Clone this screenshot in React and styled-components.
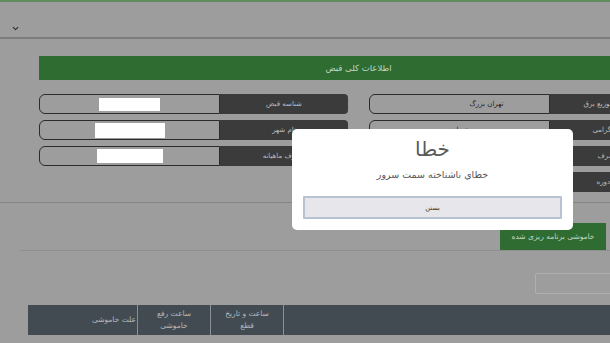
import React from 'react';
import styled, { createGlobalStyle } from 'styled-components';
import { ChevronDown } from 'lucide-react';

const GlobalStyle = createGlobalStyle`
    html, body {
        margin: 0;
        padding: 0;
        background: #9d9d9d;
        overflow: hidden;
        font-family: "DejaVu Sans", "Noto Sans", sans-serif;
    }
`;

const Page = styled.div`
    width: 610px;
    height: 343px;
    overflow: hidden;
    border-top: 2px solid #5e8c5e;
    box-sizing: border-box;
`;

const CollapseHeader = styled.div`
    height: 37px;
    padding: 16px 0 0 11px;
    box-sizing: border-box;
    border-bottom: 2px solid #7c7c7c;
    color: #2e2e2e;
`;

const InfoSection = styled.div`
    padding: 17px 0 10px 39px;
    border-bottom: 1px solid #858585;
`;

const SectionTitle = styled.div`
    width: 639px;
    height: 24px;
    background: #2f6c31;
    color: #c2d6c2;
    font-size: 8.5px;
    display: flex;
    align-items: center;
    justify-content: center;
    direction: rtl;
`;

const Columns = styled.div`
    margin-top: 14px;
    display: grid;
    grid-template-columns: 309px 309px;
    column-gap: 21px;
    align-items: start;
`;

const Column = styled.div`
    display: flex;
    flex-direction: column;
    gap: 6px;
`;

const Field = styled.div`
    display: flex;
    height: 20px;
`;

const Value = styled.div`
    flex: 0 0 181px;
    box-sizing: border-box;
    border: 1.5px solid #2b2b2b;
    border-radius: 6px 0 0 6px;
    display: flex;
    align-items: center;
    justify-content: center;
    color: #1f1f1f;
    font-size: 7px;
`;

const ValueText = styled.span`
    padding-left: ${p => p.$nudge || 0}px;
    direction: rtl;
    white-space: nowrap;
`;

const Masked = styled.span`
    display: block;
    width: ${p => p.$w}px;
    height: ${p => p.$h}px;
    background: #ffffff;
`;

const Label = styled.div`
    flex: 0 0 128px;
    background: #3b3b3b;
    border-radius: 0 4px 4px 0;
    color: #bdbdbd;
    font-size: 7px;
    display: flex;
    align-items: center;
    justify-content: center;
    direction: rtl;
    white-space: nowrap;
`;

const TabBar = styled.div`
    margin: 20px 0 0 20px;
    height: 27px;
    border-bottom: 1px solid #8f8f8f;
    display: flex;
    justify-content: flex-end;
`;

const Tab = styled.div`
    width: 106px;
    margin-right: 4px;
    background: #2f6c31;
    color: #c2d6c2;
    font-size: 7.5px;
    display: flex;
    align-items: center;
    justify-content: center;
    direction: rtl;
    white-space: nowrap;
`;

const FilterRow = styled.div`
    margin-top: 22px;
    display: flex;
    justify-content: flex-end;
`;

const FilterInput = styled.div`
    width: 80px;
    height: 19px;
    margin-right: -7px;
    border: 1px solid #b0b0b0;
    border-radius: 2px;
`;

const TableHead = styled.div`
    margin: 11px 0 0 28px;
    height: 30px;
    background: #434b52;
    display: grid;
    grid-template-columns: 110px 73px 73px 1fr;
`;

const HeadCell = styled.div`
    border-right: ${p => (p.$last ? 'none' : '1px solid #8a9096')};
    color: #b4b9bd;
    font-size: 7.5px;
    line-height: 12px;
    display: flex;
    align-items: center;
    justify-content: ${p => (p.$start ? 'flex-start' : 'center')};
    padding-right: ${p => (p.$start ? '1px' : '0')};
    text-align: center;
    direction: rtl;
`;

const Backdrop = styled.div`
    position: fixed;
    inset: 0;
    display: flex;
    align-items: flex-start;
    padding: 129px 0 0 292px;
`;

const Modal = styled.div`
    width: 281px;
    height: 101px;
    box-sizing: border-box;
    background: #ffffff;
    border-radius: 5px;
    padding: 8px 11px 0;
    display: flex;
    flex-direction: column;
    align-items: center;
    direction: rtl;
`;

const ModalTitle = styled.div`
    color: #5a5a5a;
    font-size: 20px;
    line-height: 24px;
`;

const ModalText = styled.div`
    margin-top: 7px;
    color: #555555;
    font-size: 9.5px;
    line-height: 14px;
`;

const ModalButton = styled.button`
    margin-top: 14px;
    width: 100%;
    height: 23px;
    background: #e7e7eb;
    border: 2px solid #b7c3d3;
    border-radius: 1px;
    color: #333333;
    font-family: inherit;
    font-size: 6.5px;
    padding: 0;
`;

const leftFields = [
    { label: 'شناسه قبض', mask: [61, 13] },
    { label: 'نام شهر', mask: [70, 15] },
    { label: 'مصرف ماهیانه', mask: [66, 14] },
];

const rightFields = [
    { label: 'نام شرکت توزیع برق', value: 'تهران بزرگ', nudge: 54 },
    { label: 'مشترک گرامی', value: 'تهران' },
    { label: 'نوع مصرف', value: '' },
    { label: 'شماره دوره', value: '' },
];

function App() {
    return (
        <>
        <GlobalStyle />
        <Page>
            <CollapseHeader>
                <ChevronDown size={9} strokeWidth={3} />
            </CollapseHeader>

            <InfoSection>
                <SectionTitle>اطلاعات کلی قبض</SectionTitle>
                <Columns>
                    <Column>
                        { leftFields.map( f => (
                            <Field key={ f.label }>
                                <Value>
                                    <Masked $w={ f.mask[0] } $h={ f.mask[1] } />
                                </Value>
                                <Label>{ f.label }</Label>
                            </Field>
                        ) ) }
                    </Column>
                    <Column>
                        { rightFields.map( f => (
                            <Field key={ f.label }>
                                <Value><ValueText $nudge={ f.nudge }>{ f.value }</ValueText></Value>
                                <Label>{ f.label }</Label>
                            </Field>
                        ) ) }
                    </Column>
                </Columns>
            </InfoSection>

            <TabBar>
                <Tab>خاموشی برنامه ریزی شده</Tab>
            </TabBar>

            <FilterRow>
                <FilterInput />
            </FilterRow>

            <TableHead>
                <HeadCell $start>علت خاموشی</HeadCell>
                <HeadCell>ساعت رفع<br />خاموشی</HeadCell>
                <HeadCell>ساعت و تاریخ<br />قطع</HeadCell>
                <HeadCell $last />
            </TableHead>
        </Page>

        <Backdrop>
            <Modal>
                <ModalTitle>خطا</ModalTitle>
                <ModalText>خطای ناشناخته سمت سرور</ModalText>
                <ModalButton>بستن</ModalButton>
            </Modal>
        </Backdrop>
        </>
    );
}

export default App;
